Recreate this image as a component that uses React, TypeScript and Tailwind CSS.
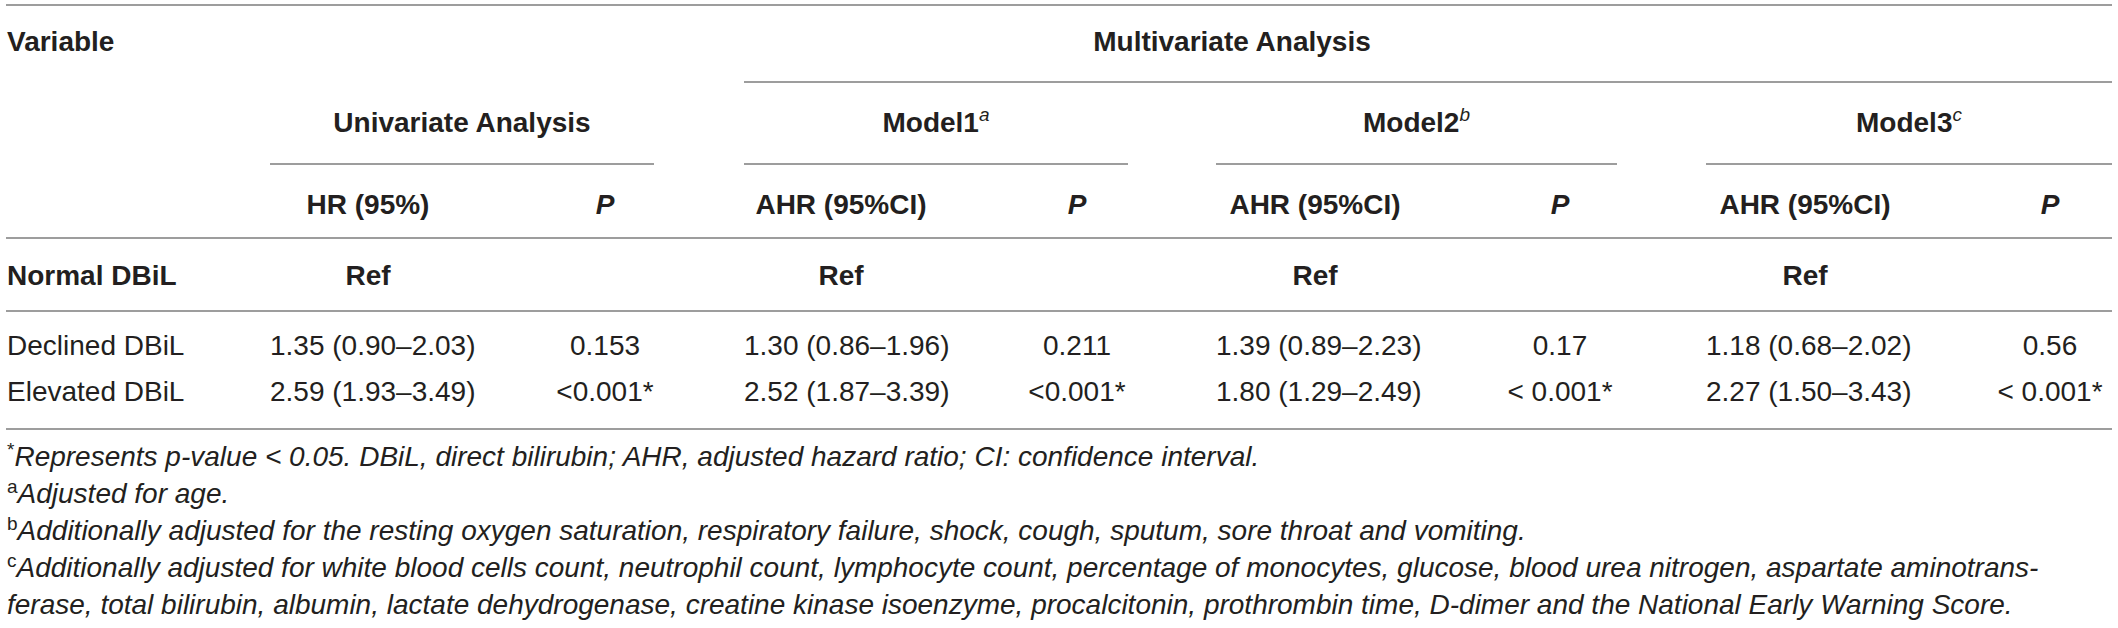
import React from "react";

const cols =
  "grid grid-cols-[264px_196px_278px_194px_278px_198px_292px_198px_208px]";

function Sup({ children }: { children: React.ReactNode }) {
  return (
    <span className="relative -top-[11px] text-[19px] italic font-normal leading-none">
      {children}
    </span>
  );
}

function FnSup({ children }: { children: React.ReactNode }) {
  return (
    <span className="relative -top-[10px] text-[19px] not-italic leading-none">
      {children}
    </span>
  );
}

export default function App() {
  const headP = <span className="italic font-bold">P</span>;
  return (
    <div className="w-[2118px] h-[628px] bg-white text-[#231f20] font-[family-name:Liberation_Sans,Arial,sans-serif] text-[28px] leading-[28px] overflow-hidden">
      <div className="pt-[4px] px-[6px]">
        <div className="border-t-2 border-[#9d9d9d]">
          {/* Row A */}
          <div className={cols}>
            <div className="pl-px pt-[22px] font-bold whitespace-nowrap">Variable</div>
            <div className="col-span-2" />
            <div className="col-span-6 pt-[22px] pb-[25px] pr-[392px] text-center font-bold border-b-2 border-[#9d9d9d] whitespace-nowrap">
              Multivariate Analysis
            </div>
          </div>
          {/* Row B */}
          <div className={cols}>
            <div />
            <div className="col-span-2 mr-[90px] pt-[26px] pb-[26px] text-center font-bold border-b-2 border-[#9d9d9d] whitespace-nowrap">
              Univariate Analysis
            </div>
            <div className="col-span-2 mr-[88px] pt-[26px] pb-[26px] text-center font-bold border-b-2 border-[#9d9d9d] whitespace-nowrap">
              Model1<Sup>a</Sup>
            </div>
            <div className="col-span-2 mr-[89px] pt-[26px] pb-[26px] text-center font-bold border-b-2 border-[#9d9d9d] whitespace-nowrap">
              Model2<Sup>b</Sup>
            </div>
            <div className="col-span-2 pt-[26px] pb-[26px] text-center font-bold border-b-2 border-[#9d9d9d] whitespace-nowrap">
              Model3<Sup>c</Sup>
            </div>
          </div>
          {/* Row C */}
          <div className={cols + " pt-[26px] pb-[18px] border-b-2 border-[#9d9d9d] font-bold whitespace-nowrap"}>
            <div />
            <div className="text-center">HR (95%)</div>
            <div className="text-center">{headP}</div>
            <div className="text-center">AHR (95%CI)</div>
            <div className="text-center">{headP}</div>
            <div className="text-center">AHR (95%CI)</div>
            <div className="text-center">{headP}</div>
            <div className="text-center">AHR (95%CI)</div>
            <div className="text-center pl-[84px]">{headP}</div>
          </div>
          {/* Row D */}
          <div className={cols + " pt-[23px] pb-[20px] border-b-2 border-[#9d9d9d] font-bold whitespace-nowrap"}>
            <div className="pl-px">Normal DBiL</div>
            <div className="text-center">Ref</div>
            <div />
            <div className="text-center">Ref</div>
            <div />
            <div className="text-center">Ref</div>
            <div />
            <div className="text-center">Ref</div>
            <div />
          </div>
          {/* Body */}
          <div className="flex flex-col gap-[18px] pt-[20px] pb-[22px] border-b-2 border-[#9d9d9d] whitespace-nowrap">
            <div className={cols}>
              <div className="pl-px">Declined DBiL</div>
              <div className="text-center">1.35 (0.90–2.03)</div>
              <div className="text-center">0.153</div>
              <div className="text-center">1.30 (0.86–1.96)</div>
              <div className="text-center">0.211</div>
              <div className="text-center">1.39 (0.89–2.23)</div>
              <div className="text-center">0.17</div>
              <div className="text-center">1.18 (0.68–2.02)</div>
              <div className="text-center pl-[84px]">0.56</div>
            </div>
            <div className={cols}>
              <div className="pl-px">Elevated DBiL</div>
              <div className="text-center">2.59 (1.93–3.49)</div>
              <div className="text-center">&lt;0.001*</div>
              <div className="text-center">2.52 (1.87–3.39)</div>
              <div className="text-center">&lt;0.001*</div>
              <div className="text-center">1.80 (1.29–2.49)</div>
              <div className="text-center">&lt; 0.001*</div>
              <div className="text-center">2.27 (1.50–3.43)</div>
              <div className="text-center pl-[84px]">&lt; 0.001*</div>
            </div>
          </div>
        </div>
        {/* Footnotes */}
        <div className="pt-[8px] italic leading-[37px] whitespace-nowrap">
          <div className="pl-px">
            <FnSup>*</FnSup>Represents p-value &lt; 0.05. DBiL, direct bilirubin; AHR, adjusted hazard ratio; CI: confidence interval.
          </div>
          <div className="pl-px">
            <FnSup>a</FnSup>Adjusted for age.
          </div>
          <div className="pl-px">
            <FnSup>b</FnSup>Additionally adjusted for the resting oxygen saturation, respiratory failure, shock, cough, sputum, sore throat and vomiting.
          </div>
          <div className="pl-px">
            <FnSup>c</FnSup>Additionally adjusted for white blood cells count, neutrophil count, lymphocyte count, percentage of monocytes, glucose, blood urea nitrogen, aspartate aminotrans-
          </div>
          <div className="pl-px">
            ferase, total bilirubin, albumin, lactate dehydrogenase, creatine kinase isoenzyme, procalcitonin, prothrombin time, D-dimer and the National Early Warning Score.
          </div>
        </div>
      </div>
    </div>
  );
}
